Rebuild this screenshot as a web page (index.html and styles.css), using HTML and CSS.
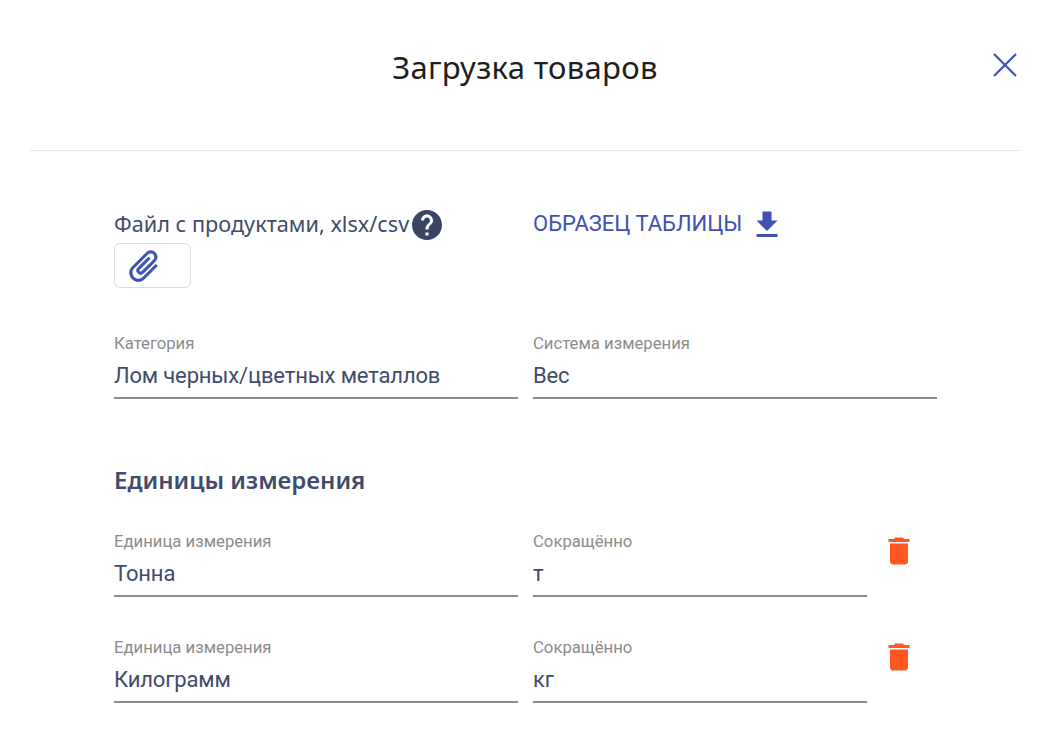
FILE: index.html
```html
<!DOCTYPE html>
<html lang="ru">
<head>
<meta charset="utf-8">
<title>Загрузка товаров</title>
<link rel="stylesheet" href="styles.css">
</head>
<body>
<div class="modal">
  <header class="head">
    <h1 class="title">Загрузка товаров</h1>
    <button class="close" aria-label="Закрыть">
      <svg width="24" height="24" viewBox="0 0 24 24"><path d="M1 1L23 23M23 1L1 23" fill="none" stroke="#3f51b5" stroke-width="2.2"/></svg>
    </button>
  </header>
  <main class="body">
    <div class="row file-row">
      <div class="col">
        <div class="file-label">
          <span class="lift">Файл с продуктами, xlsx/csv</span>
          <svg class="help" width="36" height="36" viewBox="0 0 24 24"><path fill="#3b4563" d="M12 2C6.48 2 2 6.48 2 12s4.48 10 10 10 10-4.48 10-10S17.52 2 12 2zm1 17h-2v-2h2v2zm2.07-7.75l-.9.92C13.45 12.9 13 13.5 13 15h-2v-.5c0-1.1.45-2.1 1.17-2.83l1.24-1.26c.37-.36.59-.86.59-1.41 0-1.1-.9-2-2-2s-2 .9-2 2H8c0-2.21 1.79-4 4-4s4 1.79 4 4c0 .88-.36 1.68-.93 2.25z"/></svg>
        </div>
        <button class="attach" aria-label="Прикрепить">
          <svg width="38" height="38" viewBox="0 0 24 24"><path fill="#3f51b5" stroke="#3f51b5" stroke-width=".5" d="M16.5 6v11.5c0 2.21-1.79 4-4 4s-4-1.79-4-4V5c0-1.38 1.12-2.5 2.5-2.5s2.5 1.12 2.5 2.5v10.5c0 .55-.45 1-1 1s-1-.45-1-1V6H10v9.5c0 1.38 1.12 2.5 2.5 2.5s2.5-1.12 2.5-2.5V5c0-2.21-1.79-4-4-4S7 2.79 7 5v12.5c0 3.04 2.46 5.5 5.5 5.5s5.5-2.46 5.5-5.5V6h-1.5z" transform="rotate(45 12 12)"/></svg>
        </button>
      </div>
      <div class="col">
        <a class="sample">
          <span class="lift">ОБРАЗЕЦ ТАБЛИЦЫ</span>
          <svg width="36" height="36" viewBox="0 0 24 24"><path fill="#3f51b5" d="M19 9h-4V3H9v6H5l7 7 7-7zM5 18v2h14v-2H5z"/></svg>
        </a>
      </div>
    </div>

    <div class="row cat-row">
      <div class="field"><label class="lbl">Категория</label><div class="val">Лом черных/цветных металлов</div></div>
      <div class="field"><label class="lbl">Система измерения</label><div class="val">Вес</div></div>
    </div>

    <h2 class="section">Единицы измерения</h2>

    <div class="row unit-row">
      <div class="field"><label class="lbl">Единица измерения</label><div class="val">Тонна</div></div>
      <div class="field short"><label class="lbl">Сокращённо</label><div class="val">т</div></div>
      <button class="trash" aria-label="Удалить"><svg width="36" height="36" viewBox="0 0 24 24"><path fill="#ff5722" d="M6 19c0 1.1.9 2 2 2h8c1.1 0 2-.9 2-2V7H6v12zM19 4h-3.5l-1-1h-5l-1 1H5v2h14V4z"/></svg></button>
    </div>
    <div class="row unit-row">
      <div class="field"><label class="lbl">Единица измерения</label><div class="val">Килограмм</div></div>
      <div class="field short"><label class="lbl">Сокращённо</label><div class="val">кг</div></div>
      <button class="trash" aria-label="Удалить"><svg width="36" height="36" viewBox="0 0 24 24"><path fill="#ff5722" d="M6 19c0 1.1.9 2 2 2h8c1.1 0 2-.9 2-2V7H6v12zM19 4h-3.5l-1-1h-5l-1 1H5v2h14V4z"/></svg></button>
    </div>
  </main>
</div>
</body>
</html>
```

FILE: styles.css
```css
* { box-sizing: border-box; }
html, body { margin: 0; padding: 0; background: #fff; height: 731px; overflow: hidden; }
body { font-family: Roboto, "Liberation Sans", sans-serif; color: #3b4563; }
button { border: 0; background: none; padding: 0; margin: 0; display: flex; align-items: center; justify-content: center; }

.modal { padding: 0 36px 0 30px; }
.head { position: relative; height: 151px; border-bottom: 1px solid #e6e6e6; display: flex; justify-content: center; padding-top: 46px; }
.title { margin: 0; font: 400 31px/42px "Noto Sans", sans-serif; color: #1e1e1e; letter-spacing: .3px; }
.close { position: absolute; right: 3px; top: 53px; width: 24px; height: 24px; }

.body { padding: 55px 0 0 84px; }
.row { display: flex; gap: 15px; }
.col { width: 404px; }
.file-row { height: 92px; }
.lift { margin-bottom: 2px; }
.file-label { display: flex; align-items: center; height: 37px; font: 400 21.7px/35px "Noto Sans", sans-serif; white-space: nowrap; color: #414b6b; }
.help { margin-left: 0; flex: none; }
.attach { width: 77px; height: 45px; border: 1px solid #dedede; border-radius: 6px; justify-content: flex-start; padding-left: 10px; }
.sample { display: flex; align-items: center; height: 37px; font: 400 22px/35px Roboto, sans-serif; color: #3f51b5; }
.sample svg { margin-left: 7px; }

.cat-row { margin-top: 36px; }
.field { width: 404px; height: 65px; border-bottom: 2px solid #8c8c8c; }
.field.short { width: 334px; }
.lbl { display: block; font-size: 16.7px; line-height: 19px; color: #8c8c8c; }
.val { font-size: 22px; letter-spacing: -.15px; line-height: 27px; margin-top: 9px; color: #414b6b; }

.section { margin: 63px 0 0; font: 600 24px/36px "Noto Sans", sans-serif; color: #414b6b; height: 70px; }
.unit-row { height: 65px; margin-bottom: 41px; }
.unit-row .trash { width: 36px; height: 36px; margin: 1px 0 0 -1px; }
```
